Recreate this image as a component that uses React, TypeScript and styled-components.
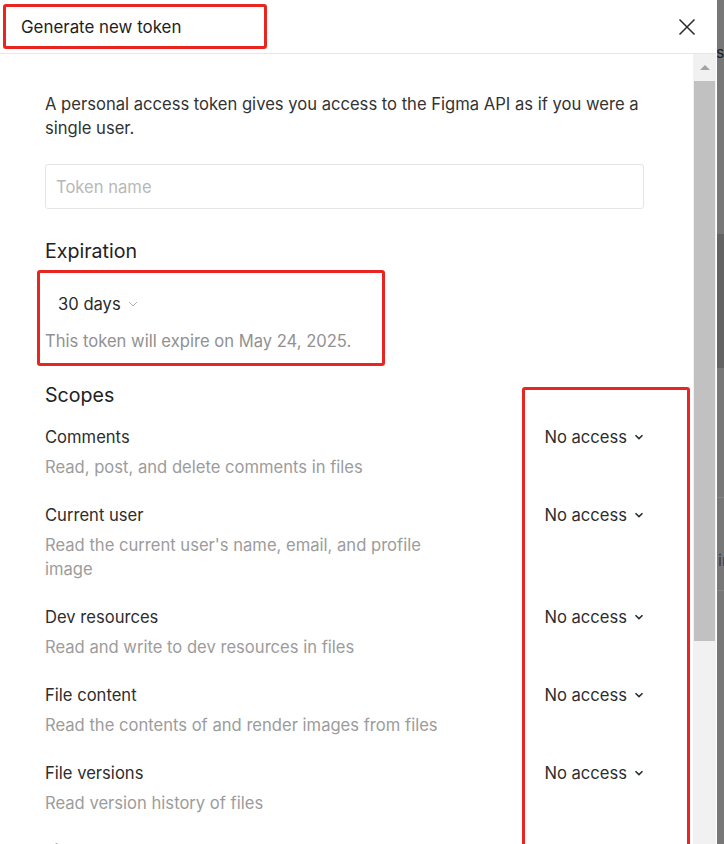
import React from "react";
import styled, { createGlobalStyle } from "styled-components";

const Global = createGlobalStyle`
  html, body { margin: 0; padding: 0; background: #747474; }
  body { font-family: Inter, "Noto Sans", sans-serif; }
  * { box-sizing: border-box; }
`;

const Stage = styled.div`
  position: relative;
  width: 724px;
  height: 844px;
  overflow: hidden;
  display: flex;
`;

const Modal = styled.div`
  width: 717px;
  flex: none;
  background: #fff;
  border-right: 1px solid #fff;
  display: flex;
  flex-direction: column;
`;

const Header = styled.header`
  height: 54px;
  flex: none;
  display: flex;
  align-items: center;
  justify-content: space-between;
  padding: 0 17px 0 21px;
  border-bottom: 1px solid #e6e6e6;
`;

const Title = styled.h1`
  margin: 0;
  font-size: 16.9px;
  font-weight: 400;
  line-height: 24px;
  color: #1e1e1e;
`;

const CloseButton = styled.button`
  width: 24px;
  height: 24px;
  padding: 0;
  border: 0;
  background: none;
  display: flex;
  align-items: center;
  justify-content: center;
  color: #2a2a2a;
`;

const Body = styled.div`
  flex: 1;
  min-height: 0;
  display: flex;
`;

const Content = styled.div`
  flex: 1;
  min-width: 0;
  padding: 38px 49px 0 45px;
  overflow: hidden;
  font-size: 16.6px;
`;

const Intro = styled.p`
  margin: 0;
  line-height: 24px;
  color: #333;
`;

const TokenInput = styled.input`
  display: block;
  margin-top: 24px;
  width: 100%;
  height: 45px;
  border: 1px solid #e5e5e5;
  border-radius: 3px;
  padding: 0 10px;
  font-family: Inter, "Noto Sans", sans-serif;
  font-size: 16.6px;
  color: #333;
  outline: none;
  &::placeholder { color: #b8b8b8; }
`;

const SectionHeading = styled.h2`
  margin: 28px 0 0;
  font-size: 19.6px;
  font-weight: 400;
  line-height: 28px;
  color: #222;
`;

const ExpirySelect = styled.button`
  margin-top: 19px;
  height: 40px;
  padding: 0 13px;
  border: 0;
  background: none;
  display: inline-flex;
  align-items: center;
  gap: 7px;
  font-family: Inter, "Noto Sans", sans-serif;
  font-size: 16.6px;
  color: #2a2a2a;
`;

const ExpiryNote = styled.p`
  margin: 5px 0 0;
  line-height: 24px;
  color: #919191;
`;

const ScopeList = styled.div`
  margin-top: 16px;
  display: flex;
  flex-direction: column;
  gap: 24px;
`;

const ScopeRow = styled.div`
  display: grid;
  grid-template-columns: 1fr auto;
  column-gap: 24px;
  align-items: start;
`;

const ScopeText = styled.div`
  max-width: 410px;
`;

const ScopeName = styled.div`
  line-height: 24px;
  color: #2e2e2e;
`;

const ScopeDesc = styled.div`
  margin-top: 6px;
  line-height: 24px;
  color: #9c9c9c;
`;

const AccessSelect = styled.button`
  height: 24px;
  padding: 0;
  border: 0;
  background: none;
  display: inline-flex;
  align-items: center;
  gap: 7px;
  font-family: Inter, "Noto Sans", sans-serif;
  font-size: 16.6px;
  color: #2e2e2e;
`;

const Scrollbar = styled.div`
  width: 23px;
  flex: none;
  background: #f1f1f1;
  display: flex;
  flex-direction: column;
`;

const ScrollArrow = styled.div`
  height: 27px;
  display: flex;
  align-items: center;
  justify-content: center;
  &::before {
    content: "";
    border-left: 5px solid transparent;
    border-right: 5px solid transparent;
    border-bottom: 5px solid #a3a3a3;
  }
`;

const ScrollThumb = styled.div`
  height: 560px;
  margin: 0 1px;
  background: #c1c1c1;
`;

const Backdrop = styled.div`
  flex: 1;
  display: flex;
  flex-direction: column;
  overflow: hidden;
`;

const Band = styled.div<{ $h?: number; $tone: string; $line?: boolean }>`
  ${(p) => (p.$h ? `height: ${p.$h}px; flex: none;` : "flex: 1;")}
  background: ${(p) => p.$tone};
  ${(p) => (p.$line ? "border-bottom: 1px solid #858585;" : "")}
  font-size: 16px;
  line-height: 24px;
  white-space: nowrap;
`;

const PeekText = styled.span<{ $top: number; $shift: number; $color: string }>`
  display: block;
  margin-top: ${(p) => p.$top}px;
  margin-left: ${(p) => p.$shift}px;
  color: ${(p) => p.$color};
`;

const Annotation = styled.div<{ $x: number; $y: number; $w: number; $h: number }>`
  position: absolute;
  left: ${(p) => p.$x}px;
  top: ${(p) => p.$y}px;
  width: ${(p) => p.$w}px;
  height: ${(p) => p.$h}px;
  border: 3.5px solid #e8261f;
  border-radius: 3px;
  pointer-events: none;
`;

const CloseIcon = () => (
  <svg width="18" height="18" viewBox="0 0 18 18" fill="none">
    <path d="M1.5 1.5L16.5 16.5M16.5 1.5L1.5 16.5" stroke="currentColor" strokeWidth="1.5" />
  </svg>
);

const LightChevron = () => (
  <svg width="10" height="6" viewBox="0 0 10 6" fill="none">
    <path d="M1 1L5 5L9 1" stroke="#b0b0b0" strokeWidth="1" />
  </svg>
);

const DarkChevron = () => (
  <svg width="10" height="6" viewBox="0 0 10 6" fill="none">
    <path d="M1.5 1.2L5 4.6L8.5 1.2" stroke="#2e2e2e" strokeWidth="1.6" />
  </svg>
);

const scopes = [
  { name: "Comments", desc: "Read, post, and delete comments in files" },
  { name: "Current user", desc: "Read the current user's name, email, and profile image" },
  { name: "Dev resources", desc: "Read and write to dev resources in files" },
  { name: "File content", desc: "Read the contents of and render images from files" },
  { name: "File versions", desc: "Read version history of files" },
  { name: "Library assets", desc: "Read data of individual published components and styles" },
];

export default function App() {
  return (
    <>
      <Global />
      <Stage>
        <Modal>
          <Header>
            <Title>Generate new token</Title>
            <CloseButton aria-label="Close">
              <CloseIcon />
            </CloseButton>
          </Header>
          <Body>
            <Content>
              <Intro>
                A personal access token gives you access to the Figma API as if you were a single user.
              </Intro>
              <TokenInput placeholder="Token name" />
              <SectionHeading>Expiration</SectionHeading>
              <ExpirySelect>
                30 days <LightChevron />
              </ExpirySelect>
              <ExpiryNote>This token will expire on May 24, 2025.</ExpiryNote>
              <SectionHeading>Scopes</SectionHeading>
              <ScopeList>
                {scopes.map((s) => (
                  <ScopeRow key={s.name}>
                    <ScopeText>
                      <ScopeName>{s.name}</ScopeName>
                      <ScopeDesc>{s.desc}</ScopeDesc>
                    </ScopeText>
                    <AccessSelect>
                      No access <DarkChevron />
                    </AccessSelect>
                  </ScopeRow>
                ))}
              </ScopeList>
            </Content>
            <Scrollbar>
              <ScrollArrow />
              <ScrollThumb />
            </Scrollbar>
          </Body>
        </Modal>
        <Backdrop>
          <Band $h={234} $tone="#777777">
            <PeekText $top={40} $shift={-1} $color="#1f1f1f">s</PeekText>
          </Band>
          <Band $h={134} $tone="#636363" />
          <Band $h={130} $tone="#777777" $line />
          <Band $h={93} $tone="#777777" $line>
            <PeekText $top={50} $shift={1} $color="#3c3c3c">ir</PeekText>
          </Band>
          <Band $tone="#777777" />
        </Backdrop>
        <Annotation $x={3} $y={4} $w={264} $h={45} />
        <Annotation $x={37} $y={270} $w={348} $h={96} />
        <Annotation $x={522} $y={387} $w={168} $h={480} />
      </Stage>
    </>
  );
}
